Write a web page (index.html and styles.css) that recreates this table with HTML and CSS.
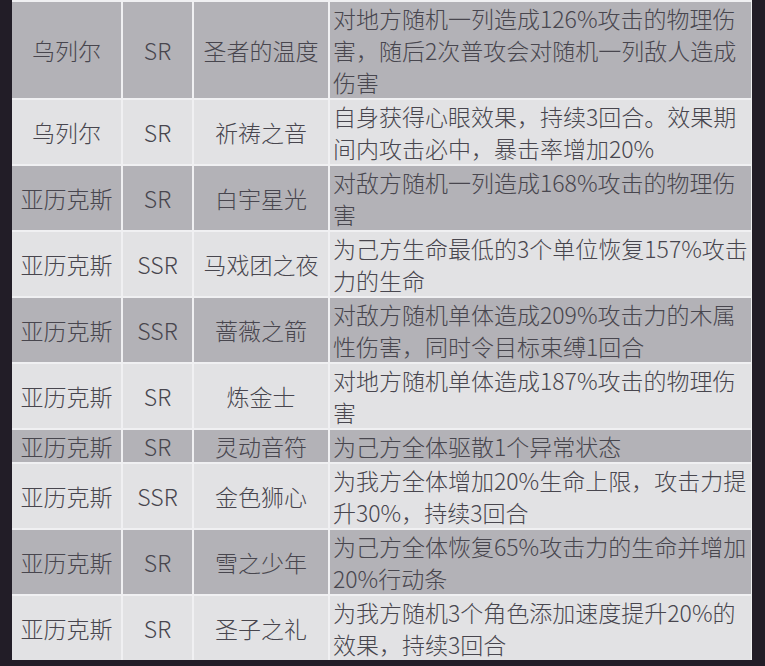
FILE: index.html
```html
<!DOCTYPE html>
<html lang="zh">
<head>
<meta charset="utf-8">
<link rel="stylesheet" href="styles.css">
</head>
<body>
<div class="sheet">
  <div class="grid">
    <div class="c dark">乌列尔</div><div class="c dark">SR</div><div class="c dark">圣者的温度</div><div class="d dark">对地方随机一列造成126%攻击的物理伤<br>害，随后2次普攻会对随机一列敌人造成<br>伤害</div>
    <div class="c light">乌列尔</div><div class="c light">SR</div><div class="c light">祈祷之音</div><div class="d light">自身获得心眼效果，持续3回合。效果期<br>间内攻击必中，暴击率增加20%</div>
    <div class="c dark">亚历克斯</div><div class="c dark">SR</div><div class="c dark">白宇星光</div><div class="d dark">对敌方随机一列造成168%攻击的物理伤<br>害</div>
    <div class="c light">亚历克斯</div><div class="c light">SSR</div><div class="c light">马戏团之夜</div><div class="d light">为己方生命最低的3个单位恢复157%攻击<br>力的生命</div>
    <div class="c dark">亚历克斯</div><div class="c dark">SSR</div><div class="c dark">蔷薇之箭</div><div class="d dark">对敌方随机单体造成209%攻击力的木属<br>性伤害，同时令目标束缚1回合</div>
    <div class="c light">亚历克斯</div><div class="c light">SR</div><div class="c light">炼金士</div><div class="d light">对地方随机单体造成187%攻击的物理伤<br>害</div>
    <div class="c dark">亚历克斯</div><div class="c dark">SR</div><div class="c dark">灵动音符</div><div class="d dark">为己方全体驱散1个异常状态</div>
    <div class="c light">亚历克斯</div><div class="c light">SSR</div><div class="c light">金色狮心</div><div class="d light">为我方全体增加20%生命上限，攻击力提<br>升30%，持续3回合</div>
    <div class="c dark">亚历克斯</div><div class="c dark">SR</div><div class="c dark">雪之少年</div><div class="d dark">为己方全体恢复65%攻击力的生命并增加<br>20%行动条</div>
    <div class="c light">亚历克斯</div><div class="c light">SR</div><div class="c light">圣子之礼</div><div class="d light">为我方随机3个角色添加速度提升20%的<br>效果，持续3回合</div>
  </div>
</div>
</body>
</html>
```
FILE: styles.css
```css
html, body {
  margin: 0;
  padding: 0;
  background: #221d27;
}
body {
  width: 765px;
  height: 666px;
  overflow: hidden;
  font-family: "Noto Sans CJK SC", "Noto Sans", sans-serif;
  font-size: 23px;
  font-weight: 300;
  line-height: 32px;
  color: #48464e;
}
.sheet {
  padding-left: 12px;
}
.grid {
  display: grid;
  grid-template-columns: 109px 69px 134px 421px;
  gap: 2px;
  width: 739px;
  padding: 2px 1px 0 0;
  background: #f0f0f2;
}
.c {
  display: flex;
  align-items: center;
  justify-content: center;
  white-space: nowrap;
}
.d {
  padding-left: 3px;
  white-space: nowrap;
  overflow: hidden;
}
.dark { background: #b3b2b7; }
.light { background: #e2e2e4; }
```
